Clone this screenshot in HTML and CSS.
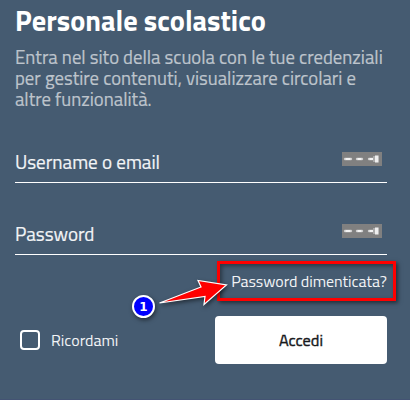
FILE: index.html
```html
<!DOCTYPE html>
<html lang="it">
  <head>
    <meta charset="utf-8">
    <title>Personale scolastico</title>
    <link rel="stylesheet" href="styles.css">
  </head>
  <body>
    <main class="login">
      <h1>Personale scolastico</h1>
      <p class="intro">
        Entra nel sito della scuola con le tue credenziali<br>
        per gestire contenuti, visualizzare circolari e<br>
        altre funzionalità.
      </p>
      <form>
        <div class="field">
          <label for="username">Username o email</label>
          <input type="text" id="username" name="username">
          <svg class="key" viewBox="0 0 40 14">
            <rect width="40" height="14" fill="#808080" />
            <path d="M3 7h6M15 7h5M27 7h5" stroke="#ccc" stroke-width="2.400" stroke-linecap="round" />
            <path d="M4 7h4M16 7h3M28 7h3" stroke="#fff" stroke-width="1.400" stroke-linecap="round" />
            <path d="M31 4h2v6h-2z" fill="#aaa" />
            <path d="M33 3.500h3v7h-3z" fill="#eee" />
            <path d="M36 3.500h1v7h-1z" fill="#bbb" />
          </svg>
        </div>
        <div class="field">
          <label for="password">Password</label>
          <input type="password" id="password" name="password">
          <svg class="key" viewBox="0 0 40 14">
            <rect width="40" height="14" fill="#808080" />
            <path d="M3 7h6M15 7h5M27 7h5" stroke="#ccc" stroke-width="2.400" stroke-linecap="round" />
            <path d="M4 7h4M16 7h3M28 7h3" stroke="#fff" stroke-width="1.400" stroke-linecap="round" />
            <path d="M31 4h2v6h-2z" fill="#aaa" />
            <path d="M33 3.500h3v7h-3z" fill="#eee" />
            <path d="M36 3.500h1v7h-1z" fill="#bbb" />
          </svg>
        </div>
        <div class="forgot">
          <a href="#">Password dimenticata?</a>
          <!-- arrow pointing at the link -->
          <svg class="arrow" viewBox="0 0 72 30">
            <path d="M1.500 25L43 9L40 2.500L68.500 7L46 26.500L47 18.500Z" fill="#f00" stroke="#fff" stroke-width="1.200" />
          </svg>
          <span class="step">1</span>
        </div>
        <div class="actions">
          <label class="remember"><input type="checkbox"><span>Ricordami</span></label>
          <button type="submit">Accedi</button>
        </div>
      </form>
    </main>
  </body>
</html>
```

FILE: styles.css
```css
* {
  box-sizing: border-box;
}
body {
  margin: 0;
  height: 400px;
  overflow: hidden;
  background-color: #455b71;
  border-bottom: 1px solid #435373;
  color: #fff;
  font-family: "Titillium Web", Roboto, sans-serif;
}
.login {
  padding: 3px 23px 0 15px;
}
h1 {
  margin: 0;
  font-size: 28.400px;
  line-height: 36px;
  white-space: nowrap;
}
.intro {
  margin: 8px 0 0;
  font-size: 18.720px;
  line-height: 21px;
  color: #bdc4cc;
  -webkit-text-stroke: 0.200px #bdc4cc;
  white-space: nowrap;
}
form {
  margin-top: 33px;
}
.field {
  display: flex;
  align-items: center;
  height: 40px;
  margin-bottom: 32px;
  padding-right: 5px;
  border-bottom: 1px solid #fff;
}
.field label {
  padding-bottom: 2px;
  font-size: 19.100px;
  white-space: nowrap;
  color: #f2f4f6;
  -webkit-text-stroke: 0.200px #f2f4f6;
}
.field input {
  flex: 1;
  min-width: 0;
  border: none;
  outline: none;
  background: transparent;
}
.key {
  width: 40px;
  height: 14px;
  margin-bottom: 7px;
}
.forgot {
  position: relative;
  display: flex;
  align-items: center;
  justify-content: center;
  width: 179px;
  height: 40px;
  margin: -26px -9px 15px auto;
  padding-left: 5px;
  border: 3px solid #f00;
  box-shadow: 2px 2px 4px rgba(0, 0, 0, 0.5), inset 2px 2px 4px rgba(0, 0, 0, 0.4);
}
.forgot a {
  color: #f2f4f6;
  font-size: 16px;
  letter-spacing: -0.050px;
  text-decoration: none;
  white-space: nowrap;
}
.arrow {
  position: absolute;
  left: -62px;
  top: 14px;
  width: 72px;
  height: 30px;
  filter: drop-shadow(1px 2px 2px rgba(0, 0, 0, 0.5));
}
.step {
  position: absolute;
  left: -88px;
  top: 31px;
  width: 23px;
  height: 23px;
  border: 2px solid #fff;
  border-radius: 50%;
  background-color: #00f;
  box-shadow: 1px 2px 4px rgba(0, 0, 0, 0.5);
  font: bold 12px/20px "DejaVu Sans", sans-serif;
  text-align: center;
}
.actions {
  display: flex;
  align-items: center;
  justify-content: space-between;
}
.remember {
  display: flex;
  align-items: center;
  gap: 11px;
  padding-left: 5px;
  font-size: 16px;
}
.remember input {
  appearance: none;
  width: 20px;
  height: 20px;
  margin: 0;
  border: 2px solid #fff;
  border-radius: 4px;
}
.remember span {
  color: #f2f4f6;
}
button {
  width: 172px;
  height: 48px;
  padding: 0;
  border: none;
  border-radius: 4px;
  background-color: #fff;
  color: #17191c;
  font: 400 16.300px "Titillium Web", Roboto, sans-serif;
  -webkit-text-stroke: 0.400px #17191c;
}
```
